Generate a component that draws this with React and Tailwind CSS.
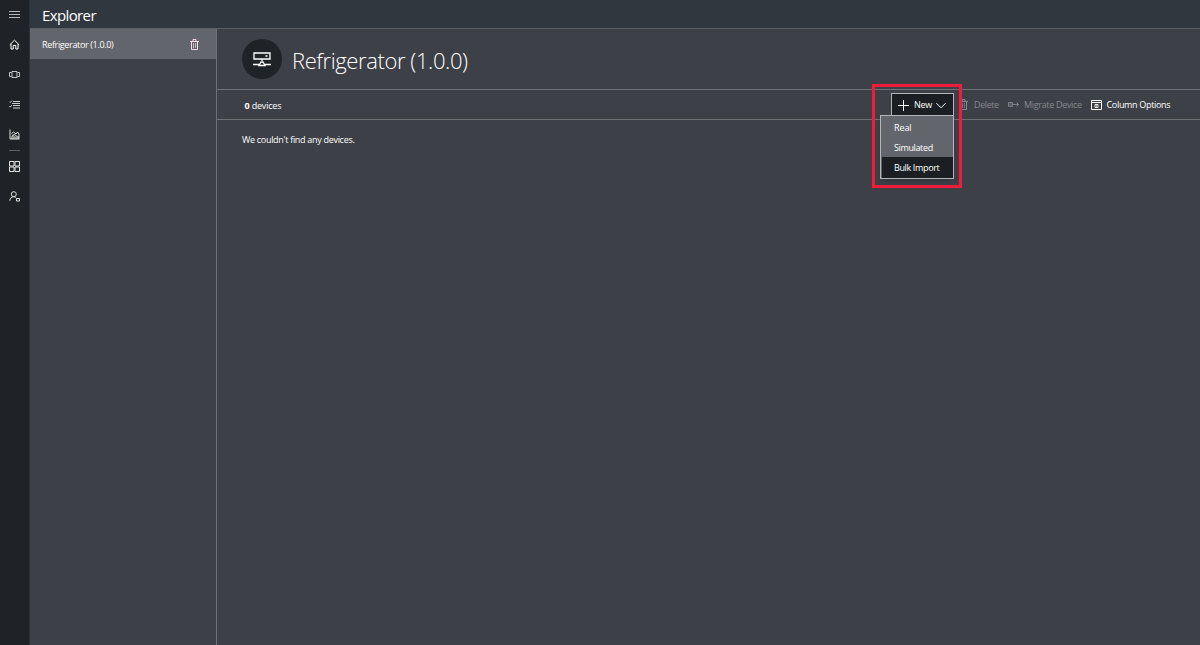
import React from 'react';

const Icon = ({ children, className = 'size-[11px]', box = '0 0 11 11' }) => (
  <svg viewBox={box} className={`shrink-0 ${className}`} fill="none" stroke="currentColor" strokeWidth="1">
    {children}
  </svg>
);

const NavItem = ({ children }) => (
  <div className="flex h-[30px] w-[29px] items-start justify-center pt-[9px]">{children}</div>
);

const Trash = ({ className }) => (
  <Icon className={`h-[11px] w-[9px] ${className}`} box="0 0 9 11">
    <path d="M0 2.5h9M3 2V.5h3V2M1.5 3v7.5h6V3" />
    <path d="M3.5 4v5M5.5 4v5" opacity=".7" />
  </Icon>
);

function Sidebar() {
  return (
    <nav className="flex w-[30px] shrink-0 flex-col border-r border-[#2d3136] bg-[#1f2327] text-[#e0e0e0]">
      <NavItem>
        <Icon><path d="M0 2.5h11M0 5.5h11M0 8.5h11" stroke="#b5b7b9" /></Icon>
      </NavItem>
      <NavItem>
        <Icon><path d="M.8 5.8 5.5 1.2l4.7 4.6M2 5v5h2.2V6.5h2.6V10H9V5" stroke="#fff" /></Icon>
      </NavItem>
      <NavItem>
        <Icon><path d="M3 2.5h5v6H3zM2.5 3.5h-2v4h2M8.5 3.5h2v4h-2" strokeWidth=".85" /></Icon>
      </NavItem>
      <NavItem>
        <Icon><path d="M4 2.5h7M3 4.5h8M4 6.5h7M4 9h7M.3 2.7l.9.9 1.8-2M.3 7.2l.9.9 1.8-2" strokeWidth=".9" /></Icon>
      </NavItem>
      <NavItem>
        <Icon>
          <path d="M1 .5V10h9.5M2.5 4.5l2-1.500L7 5l1.500-2L10 5v4.500M3 6.500l2.500-1L10 9" />
          <path d="M2 7.500 4.500 6 7 8l3-1v3H2z" fill="currentColor" stroke="none" opacity=".6" />
        </Icon>
      </NavItem>
      <div className="ml-[9px] h-px w-[11px] bg-[#5c6064]" />
      <div className="pt-[0.5px]">
        <NavItem>
          <Icon><path d="M.5.5H5V5H.5zM6 .5h4.500V5H6zM.5 6H5v4.500H.5zM6 6h4.500v4.500H6z" stroke="#e4e4e4" /></Icon>
        </NavItem>
        <NavItem>
          <Icon><circle cx="4.8" cy="3.2" r="2.5" /><path d="M.8 9.7c.2-2.300 1.700-4 4-4 1 0 1.800.4 2.300 1M7.500 7.500h3v2.500h-3z" /></Icon>
        </NavItem>
      </div>
    </nav>
  );
}

function Toolbar() {
  return (
    <div className="flex h-[30px] shrink-0 border-b border-[#6e7174] text-[9px] text-white">
      <div className="w-[655px] shrink-0 pl-[27.5px] pt-[9px] leading-[14px] tracking-[-0.18px]">
        <b className="font-bold">0</b> devices
      </div>
      <div className="relative h-[29px] w-[90px] shrink-0">
        <div className="absolute left-0 top-[-6px] z-10 h-[104px] w-[90px] border-3 border-[#f21b3c]">
          <div className="ml-[16px] mt-[6px] flex h-[23px] w-[63px] items-center border border-b-0 border-[#b4b6b8] bg-[#1b1f23] pl-[6px]">
            <Icon><path d="M5.5 0v11M0 5.5h11" /></Icon>
            <span className="ml-[5px] w-[22px] tracking-[-0.25px]">New</span>
            <Icon className="h-[11px] w-[10px]" box="0 0 10 11"><path d="M.4 3.2 5 7.8l4.600-4.600" /></Icon>
          </div>
          <div className="ml-[5px] mt-[-1px] h-[64px] w-[74px] border border-[#b4b6b8] bg-[#63656c] leading-[20px] shadow-md">
            <div className="h-[21px] pl-[13px] pt-[2px] tracking-[-0.1px]">Real</div>
            <div className="h-[20px] pl-[13px] pt-px tracking-[-0.37px]">Simulated</div>
            <div className="ml-px h-[21px] bg-[#1b1f23] pl-[12px] pt-px tracking-[-0.36px]">Bulk Import</div>
          </div>
        </div>
      </div>
      <div className="flex h-[29px] items-center text-[#85888c]">
        <Trash className="ml-[-3px]" />
        <span className="ml-[6px] w-[34px] whitespace-nowrap tracking-[-0.4px]">Delete</span>
        <Icon>
          <path d="M.5 3.5h4v4h-4z" fill="currentColor" fillOpacity=".4" strokeWidth=".8" />
          <path d="M5 5.5h5.500M8.500 3.500l2 2-2 2" strokeWidth=".9" />
        </Icon>
        <span className="ml-[5px] w-[67px] whitespace-nowrap tracking-[-0.32px]">Migrate Device</span>
        <Icon className="size-[11px] text-white">
          <path d="M.5 1.5h10v9H.5zM.5 3.5h10" />
          <path d="M4 5.5h3v3H4z" strokeWidth=".9" />
          <path d="M5 6.5h1v1H5z" fill="currentColor" stroke="none" />
        </Icon>
        <span className="ml-[4.5px] whitespace-nowrap tracking-[-0.32px] text-white">Column Options</span>
      </div>
    </div>
  );
}

export default function App() {
  return (
    <div className="flex h-[645px] w-[1200px] overflow-hidden bg-[#3d4047] font-['Open_Sans','Noto_Sans',sans-serif] text-white">
      <Sidebar />
      <div className="flex min-w-0 flex-1 flex-col">
        <header className="h-[29px] shrink-0 border-b border-[#5b6063] bg-[#30373e] pl-[12px] text-[15px] leading-[31px] tracking-[-0.62px]">
          Explorer
        </header>
        <div className="flex min-h-0 flex-1">
          <aside className="w-[187px] shrink-0 border-r border-[#6e7174]">
            <div className="flex h-[30px] items-center bg-[#63656c] pl-[12px] text-[9px]">
              <span className="w-[148px] pt-[2px] tracking-[-0.35px]">Refrigerator (1.0.0)</span>
              <Trash className="text-[#f5dce6]" />
            </div>
          </aside>
          <main className="flex min-w-0 flex-1 flex-col">
            <div className="flex h-[61px] shrink-0 items-center border-b border-[#6e7174] pl-[25px]">
              <div className="flex size-[40px] items-center justify-center rounded-full bg-[#1f2327]">
                <Icon className="h-[15px] w-[18px]" box="0 0 18 15">
                  <path d="M1 1h16v6H1zM12.500 4h2M9 7v2M6 13.500 8 10h2l2 3.500zM0 12.500h6.500M11.500 12.500H18" strokeWidth="1.300" />
                </Icon>
              </div>
              <h1 className="ml-[10px] mt-px whitespace-nowrap text-[22px] font-light leading-[30px] tracking-[-0.4px]">Refrigerator (1.0.0)</h1>
            </div>
            <Toolbar />
            <p className="pl-[25px] pt-[13px] text-[9px] leading-[14px] tracking-[-0.3px]">We couldn't find any devices.</p>
          </main>
        </div>
      </div>
    </div>
  );
}
